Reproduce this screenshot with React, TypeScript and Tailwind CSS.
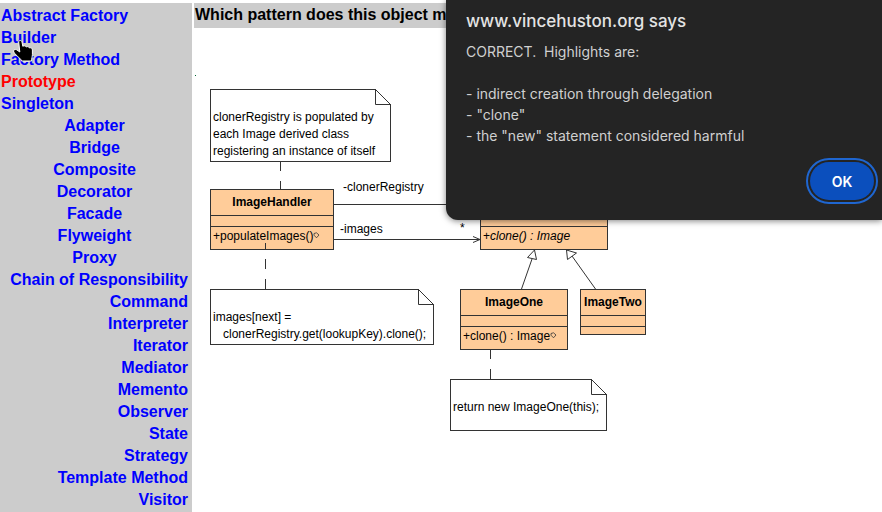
import type { ReactNode } from "react";

const creational = ["Abstract Factory", "Builder", "Factory Method", "Prototype", "Singleton"];
const structural = ["Adapter", "Bridge", "Composite", "Decorator", "Facade", "Flyweight", "Proxy"];
const behavioral = [
  "Chain of Responsibility",
  "Command",
  "Interpreter",
  "Iterator",
  "Mediator",
  "Memento",
  "Observer",
  "State",
  "Strategy",
  "Template Method",
  "Visitor",
];

function PatternList({ names, align }: { names: string[]; align: string }) {
  return (
    <ul className={align}>
      {names.map((name) => (
        <li key={name}>
          <a href="#" className={name === "Prototype" ? "text-[#ff0000]" : "text-[#0000ff]"}>
            {name}
          </a>
        </li>
      ))}
    </ul>
  );
}

function Note({ place, children }: { place: string; children: ReactNode }) {
  return (
    <div className={`absolute flex items-end whitespace-pre border border-[#333] bg-white pl-0.5 ${place}`}>
      <svg className="absolute -right-px -top-px h-4 w-4" viewBox="0 0 16 16" fill="none" stroke="#333">
        <path d="M0 0H16V16Z" fill="white" stroke="none" />
        <path d="M0.5 0V15.5H16M0.5 0.5L15.5 15.5" />
      </svg>
      <p>{children}</p>
    </div>
  );
}

function ClassBox({
  place,
  name,
  method,
  abstract,
  linked,
}: {
  place: string;
  name?: string;
  method?: string;
  abstract?: boolean;
  linked?: boolean;
}) {
  return (
    <div className={`absolute flex flex-col border border-[#333] bg-[#ffcc99] ${place}`}>
      <div className="h-[26px] border-b border-[#333] pt-1 text-center font-bold">{name}</div>
      <div className="h-[11px] border-b border-[#333]" />
      <div className="flex items-start whitespace-pre pl-0.5 pt-px">
        {method && <span>+</span>}
        <span className={abstract ? "italic" : ""}>{method}</span>
        {linked && (
          <svg className="mt-1 h-[7px] w-[7px]" viewBox="0 0 7 7" fill="none" stroke="#333" strokeWidth="0.8">
            <path d="M1 1.5L3.5 0.8L6 3L3.5 5.8L1 3.2Z" />
          </svg>
        )}
      </div>
    </div>
  );
}

function Diagram() {
  return (
    <div className="relative h-[484px] overflow-hidden text-[12px] leading-[17px] text-black">
      <ClassBox place="left-4 top-[161px] h-[61px] w-[124px]" name="ImageHandler" method="populateImages()" linked />
      <ClassBox place="left-[286px] top-[161px] h-[61px] w-32" method="clone() : Image" abstract />
      <ClassBox place="left-[266px] top-[261px] h-[61px] w-[108px]" name="ImageOne" method="clone() : Image" linked />
      <ClassBox place="left-[386px] top-[261px] h-[46px] w-[66px]" name="ImageTwo" />

      <Note place="left-4 top-[61px] h-[73px] w-[181px] pb-px">
        {"clonerRegistry is populated by\neach Image derived class\nregistering an instance of itself"}
      </Note>
      <Note place="left-4 top-[261px] h-14 w-56 pb-px">{"images[next] =\n   clonerRegistry.get(lookupKey).clone();"}</Note>
      <Note place="left-64 top-[351px] h-[52px] w-[157px] pb-[14px]">return new ImageOne(this);</Note>

      <span className="absolute left-[149px] top-[151px]">-clonerRegistry</span>
      <span className="absolute left-[146px] top-[193px]">-images</span>
      <span className="absolute left-[266px] top-[192px]">*</span>

      <svg
        className="absolute left-0 top-0 h-[484px] w-[688px]"
        viewBox="194 28 688 484"
        fill="none"
        stroke="#333"
      >
        <rect x="195" y="75" width="1" height="1" fill="#063" stroke="none" />
        <path d="M280.5 162V171M280.5 181V189M265.5 243V250M265.5 259V269M265.5 279V289M490.5 350V359M490.5 369V379" />
        <path d="M334 204.5H480M334 239.5H480M473 236.5L480 239.5L473 242.5" />
        <path d="M521.5 289L532 259M595.5 289L572 256" />
        <path d="M534.5 250L527.5 257.5L536.5 259.5ZM566.5 250L567.5 259.5L576.5 253Z" fill="white" />
      </svg>
    </div>
  );
}

function HandCursor() {
  return (
    <svg
      className="pointer-events-none absolute left-3 top-[39px] h-6 w-[22px]"
      viewBox="12 39 22 24"
      fill="black"
      stroke="white"
      strokeLinejoin="round"
    >
      <path d="M18.7 42C18.7 40 21.6 40 22 42L22.8 46.3C24 45.4 25.8 45.7 26.3 47C27.6 46.2 29 46.6 29.5 48C31 47.4 32.3 48.2 32.4 50V54.5C32.3 57 31.6 58 31.6 61H21.5C21.3 58.5 16.5 56.5 13.7 52C13 50 15 48.8 16.7 49.8L19.8 52Z" />
    </svg>
  );
}

export default function App() {
  return (
    <div className="relative flex min-h-screen gap-0.5 overflow-hidden bg-white pt-[3px] font-['Liberation_Sans',Arial,sans-serif]">
      <nav className="w-48 shrink-0 bg-[#cccccc] pl-px pr-1 pt-0.5 text-[16px] font-bold leading-[22px]">
        <PatternList names={creational} align="text-left" />
        <PatternList names={structural} align="text-center" />
        <PatternList names={behavioral} align="text-right" />
      </nav>

      <main className="min-w-0 flex-1">
        <h1 className="h-[25px] truncate bg-[#cccccc] pl-px text-[16px] font-bold leading-[23px] text-black">
          Which pattern does this object m
        </h1>
        <Diagram />
      </main>

      <HandCursor />

      <section
        role="alertdialog"
        aria-labelledby="alert-title"
        className="absolute left-[446px] right-0 top-0 flex h-[220px] flex-col rounded-bl-xl bg-[#242424] pb-4 pl-5 pr-1 pt-[9px] font-['Inter',sans-serif] text-[#e3e3e3] shadow-[0_1px_6px_rgba(0,0,0,0.5)]"
      >
        <h2 id="alert-title" className="text-[17px] font-medium leading-6">
          www.vincehuston.org says
        </h2>
        <p className="mt-2 whitespace-pre text-[14px] leading-[21px] text-[#d0d0d0]">
          {'CORRECT.  Highlights are:\n\n- indirect creation through delegation\n- "clone"\n- the "new" statement considered harmful'}
        </p>
        <button
          type="button"
          className="mt-auto flex h-[46px] w-[72px] items-center justify-center self-end rounded-full border-2 border-[#1f66d0] bg-[#0b4fbd] bg-clip-content p-0.5 text-[14px] font-semibold text-white"
        >
          OK
        </button>
      </section>
    </div>
  );
}
